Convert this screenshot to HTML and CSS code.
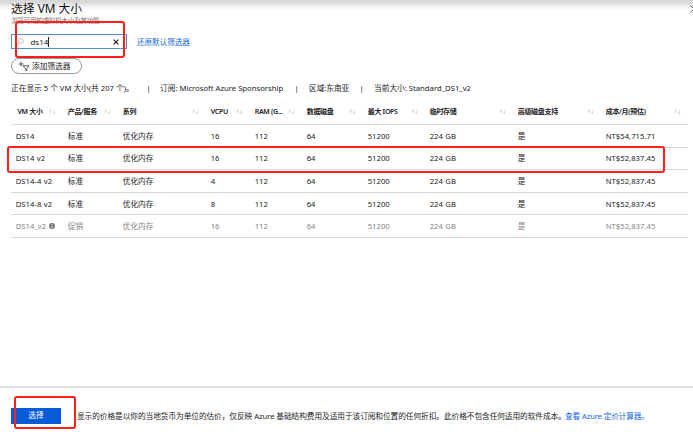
FILE: index.html
```html
<!DOCTYPE html>
<html>
<head>
<meta charset="utf-8">
<title>选择 VM 大小</title>
<link rel="stylesheet" href="styles.css">
</head>
<body>
<svg class="defs" width="0" height="0"><symbol id="sort" viewBox="0 0 7 6"><path d="M1.7 4.5V.8M.4 2.1 1.7.8 3 2.1M5.2 1.3V5M3.9 3.7 5.2 5 6.5 3.7" fill="none" stroke="#bbb" stroke-width=".55"/></symbol></svg>
<main class="blade">
  <header class="head">
    <h1>选择 VM 大小</h1>
    <p class="subtitle">浏览可用的虚拟机大小及其功能</p>
    <svg class="close" viewBox="0 0 8 8"><path d="M.5.5 7.5 7.5M7.5.5.5 7.5" stroke="#555" stroke-width="1" fill="none"/></svg>
  </header>
  <div class="search-row">
    <div class="search">
      <svg class="lens" viewBox="0 0 7 8"><circle cx="4" cy="3" r="2.3" fill="none" stroke="#999" stroke-width=".6"/><path d="M2.4 4.7.5 6.8" stroke="#999" stroke-width=".6"/></svg>
      <span class="query">ds14</span>
      <svg class="clear" viewBox="0 0 6 6"><path d="M.6.6 5.4 5.4M5.4.6.6 5.4" stroke="#222" stroke-width="1.2"/></svg>
      <i class="mark mark-search"></i>
    </div>
    <a class="reset">还原默认筛选器</a>
  </div>
  <div class="add"><svg viewBox="0 0 12 11"><path d="M.5 3H5.5M3 .5V5.5" stroke="#333" stroke-width=".8"/><path d="M5 4.8H11L8.8 7.5V9.8L7.4 9V7.5Z" fill="none" stroke="#333" stroke-width=".8"/></svg><span>添加筛选器</span></div>
  <div class="summary"><span class="s1">正在显示 5 个 VM 大小(共 207 个)。</span><span class="s2">|</span><span class="s3">订阅: Microsoft Azure Sponsorship</span><span class="s4">|</span><span class="s5">区域:东南亚</span><span class="s6">|</span><span>当前大小: Standard_DS1_v2</span></div>
  <section class="table">
    <div class="row th">
      <div>VM 大小<svg><use href="#sort"/></svg></div><div>产品/服务<svg><use href="#sort"/></svg></div><div>系列<svg><use href="#sort"/></svg></div><div>VCPU<svg><use href="#sort"/></svg></div><div>RAM (G...<svg><use href="#sort"/></svg></div><div>数据磁盘<svg><use href="#sort"/></svg></div><div>最大 IOPS<svg><use href="#sort"/></svg></div><div>临时存储<svg><use href="#sort"/></svg></div><div>高级磁盘支持<svg><use href="#sort"/></svg></div><div>成本/月(预估)<svg><use href="#sort"/></svg></div>
    </div>
    <div class="row"><div>DS14</div><div>标准</div><div>优化内存</div><div>16</div><div>112</div><div>64</div><div>51200</div><div>224 GB</div><div>是</div><div>NT$54,715.71</div></div>
    <div class="row picked"><div>DS14 v2</div><div>标准</div><div>优化内存</div><div>16</div><div>112</div><div>64</div><div>51200</div><div>224 GB</div><div>是</div><div>NT$52,837.45</div><i class="mark mark-row"></i></div>
    <div class="row"><div>DS14-4 v2</div><div>标准</div><div>优化内存</div><div>4</div><div>112</div><div>64</div><div>51200</div><div>224 GB</div><div>是</div><div>NT$52,837.45</div></div>
    <div class="row"><div>DS14-8 v2</div><div>标准</div><div>优化内存</div><div>8</div><div>112</div><div>64</div><div>51200</div><div>224 GB</div><div>是</div><div>NT$52,837.45</div></div>
    <div class="row off"><div>DS14_v2<svg class="info" viewBox="0 0 6 6"><circle cx="3" cy="3" r="3" fill="#777"/><path d="M3 1.1V2M3 2.6V4.9" stroke="#fff" stroke-width=".8"/></svg></div><div>促销</div><div>优化内存</div><div>16</div><div>112</div><div>64</div><div>51200</div><div>224 GB</div><div>是</div><div>NT$52,837.45</div></div>
  </section>
  <footer>
    <div class="choose">选择<i class="mark mark-choose"></i></div>
    <p class="note">显示的价格是以你的当地货币为单位的估价，仅反映 Azure 基础结构费用及适用于该订阅和位置的任何折扣。此价格不包含任何适用的软件成本。</p><a class="calc">查看 Azure 定价计算器。</a>
  </footer>
</main>
</body>
</html>
```

FILE: styles.css
```css
* { box-sizing: border-box; }
body { margin: 0; background: #fff; color: #222; font: 7.7px/12px "Noto Sans", "Noto Sans CJK SC", sans-serif; overflow: hidden; }
.defs { position: absolute; }
.blade { width: 693px; height: 435px; display: flex; flex-direction: column; overflow: hidden; background: linear-gradient(#d5d5d5 0, #dcdcdc 3px, #f5f5f5 7px, #fff 11px); white-space: nowrap; }
h1, p { margin: 0; font-weight: 400; }
.head { height: 34px; padding-left: 11px; position: relative; flex: none; }
h1 { font-size: 11.8px; line-height: 17px; color: #111; }
.subtitle { font-size: 6.8px; line-height: 7px; height: 7px; letter-spacing: -.5px; color: #777; }
.close { position: absolute; width: 8px; height: 8px; left: 690px; top: 5px; }
.search-row { display: flex; height: 15px; margin-left: 11px; flex: none; align-items: center; }
.search { width: 116px; height: 15px; border: 1px solid #4d8fd8; position: relative; display: flex; align-items: center; padding: 0 7px 0 5px; }
.lens { width: 7px; height: 8px; }
.query { margin-left: 6.5px; font-size: 7.9px; line-height: 10px; border-right: 1px solid #222; flex: none; }
.clear { width: 6px; height: 6px; margin-left: auto; }
.reset, .calc { color: #1769dd; }
.reset { margin-left: 10px; letter-spacing: -.15px; }
.mark { position: absolute; border: 2px solid #ff2118; border-radius: 3px; }
.mark-search { left: 3px; top: -14px; width: 110px; height: 37px; }
.add { display: flex; align-items: center; width: 71px; height: 16px; margin: 9px 0 0 11px; border: 1px solid #999; border-radius: 8px; padding-left: 6px; flex: none; }
.add svg { width: 12px; height: 11px; margin-right: 2px; }
.summary { display: flex; margin: 8px 0 0 11px; height: 12px; flex: none; }
.s1 { width: 135.5px; }
.s2 { width: 13.5px; }
.s3 { width: 134.5px; }
.s4 { width: 14.5px; }
.s5 { width: 50.5px; letter-spacing: -.05px; }
.s6 { width: 14.5px; }
.table { margin: 6px 0 0 11px; width: 677px; flex: none; }
.row { display: grid; grid-template-columns: 52px 55px 88px 44px 52px 61px 62px 88px 88px 87px; height: 22.6px; border-bottom: 1px solid #d8d8d8; position: relative; align-items: center; letter-spacing: .02px; word-spacing: .4px; }
.row > div { padding: 0 7px 0 4.7px; display: flex; align-items: center; }
.th { height: 25px; font-weight: 600; font-size: 7px; letter-spacing: -.3px; word-spacing: 0; color: #222; }
.th > div { padding-bottom: 1px; }
.th > div:first-child { padding-left: 6.5px; }
.th svg { width: 7px; height: 6px; margin-left: auto; }
.off { color: #858585; }
.info { width: 6px; height: 6px; margin-left: 3px; }
.mark-row { left: -4px; top: -2px; width: 658px; height: 27px; }
footer { margin-top: auto; height: 49px; border-top: 2px solid #e0e0e0; padding: 20px 0 0 11px; display: flex; align-items: flex-start; flex: none; }
.choose { width: 50px; height: 16px; background: #0a5bd9; color: #fff; line-height: 15px; text-align: center; position: relative; flex: none; }
.mark-choose { left: 3px; top: -12px; width: 62px; height: 33px; }
.note { margin: 2px 0 0 16px; width: 488px; letter-spacing: -.07px; }
.calc { margin-top: 2px; letter-spacing: -.15px; }
```
